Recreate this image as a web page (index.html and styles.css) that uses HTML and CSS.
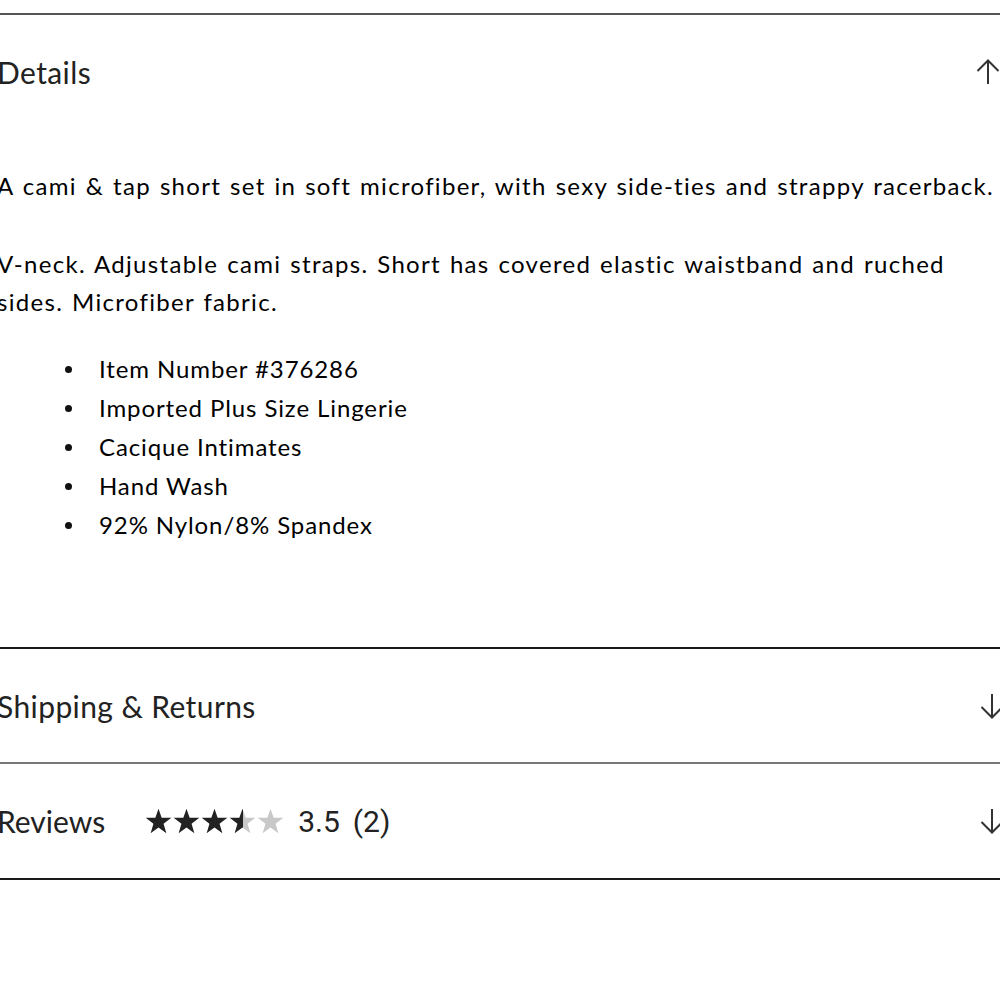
FILE: index.html
```html
<!DOCTYPE html>
<html lang="en">
<head>
<meta charset="utf-8">
<title>Product details</title>
<link rel="stylesheet" href="styles.css">
</head>
<body>
<div class="accordion">
  <section class="panel panel-open">
    <div class="panel-head">
      <h2 class="panel-title">Details</h2>
      <svg class="arrow" viewBox="0 0 24 26" width="24" height="26" aria-hidden="true"><path d="M12 25V1M1.5 12L12 1.5L22.5 12" fill="none" stroke="#333" stroke-width="2"/></svg>
    </div>
    <div class="panel-body">
      <p class="para">A cami &amp; tap short set in soft microfiber, with sexy side-ties and strappy racerback.</p>
      <p class="para">V-neck. Adjustable cami straps. Short has covered elastic waistband and ruched sides. Microfiber fabric.</p>
      <ul class="facts">
        <li>Item Number #376286</li>
        <li>Imported Plus Size Lingerie</li>
        <li>Cacique Intimates</li>
        <li>Hand Wash</li>
        <li>92% Nylon/8% Spandex</li>
      </ul>
    </div>
  </section>
  <section class="panel panel-ship">
    <div class="panel-head">
      <h2 class="panel-title">Shipping &amp; Returns</h2>
      <svg class="arrow arrow-down" viewBox="0 0 24 26" width="24" height="26" aria-hidden="true"><path d="M12 1V25M1.5 14L12 24.5L22.5 14" fill="none" stroke="#333" stroke-width="2"/></svg>
    </div>
  </section>
  <section class="panel panel-reviews">
    <div class="panel-head panel-head-reviews">
      <div class="review-line">
        <h2 class="panel-title title-reviews">Reviews</h2>
        <span class="stars" aria-label="3.5 out of 5 stars">
          <svg class="star" viewBox="0 0 24 23" width="27" height="26"><polygon points="12,0.5 14.8,8.6 23.4,8.7 16.5,13.9 19,22.3 12,17.3 5,22.3 7.5,13.9 0.6,8.7 9.2,8.6" fill="#222"/></svg>
          <svg class="star" viewBox="0 0 24 23" width="27" height="26"><polygon points="12,0.5 14.8,8.6 23.4,8.7 16.5,13.9 19,22.3 12,17.3 5,22.3 7.5,13.9 0.6,8.7 9.2,8.6" fill="#222"/></svg>
          <svg class="star" viewBox="0 0 24 23" width="27" height="26"><polygon points="12,0.5 14.8,8.6 23.4,8.7 16.5,13.9 19,22.3 12,17.3 5,22.3 7.5,13.9 0.6,8.7 9.2,8.6" fill="#222"/></svg>
          <svg class="star" viewBox="0 0 24 23" width="27" height="26"><defs><linearGradient id="half"><stop offset="50%" stop-color="#222"/><stop offset="50%" stop-color="#c8c8c8"/></linearGradient></defs><polygon points="12,0.5 14.8,8.6 23.4,8.7 16.5,13.9 19,22.3 12,17.3 5,22.3 7.5,13.9 0.6,8.7 9.2,8.6" fill="url(#half)"/></svg>
          <svg class="star" viewBox="0 0 24 23" width="27" height="26"><polygon points="12,0.5 14.8,8.6 23.4,8.7 16.5,13.9 19,22.3 12,17.3 5,22.3 7.5,13.9 0.6,8.7 9.2,8.6" fill="#c8c8c8"/></svg>
        </span>
        <span class="score">3.5</span>
        <span class="count">(2)</span>
      </div>
      <svg class="arrow arrow-down" viewBox="0 0 24 26" width="24" height="26" aria-hidden="true"><path d="M12 1V25M1.5 14L12 24.5L22.5 14" fill="none" stroke="#333" stroke-width="2"/></svg>
    </div>
  </section>
</div>
</body>
</html>
```
FILE: styles.css
```css
html, body {
  margin: 0;
  padding: 0;
  background: #fff;
}
body {
  font-family: "Lato", "Noto Sans", sans-serif;
  color: #111;
  overflow: hidden;
}
.accordion {
  margin: 13px 0 0 -3px;
  width: 1007px;
}
.panel {
  border-top: 2px solid #555;
}
.panel-ship {
  border-top-color: #1a1a1a;
}
.panel-reviews {
  border-top-color: #777;
  border-bottom: 2px solid #1a1a1a;
}
.panel-head {
  height: 113px;
  display: flex;
  align-items: center;
  justify-content: space-between;
}
.panel-head-reviews {
  height: 114px;
}
.panel-title {
  margin: 0;
  font-size: 30px;
  font-weight: 400;
  letter-spacing: 0.4px;
  color: #222;
}
.title-reviews {
  letter-spacing: 0;
}
.arrow {
  display: block;
  margin-right: 4px;
}
.arrow-down {
  margin-right: 0;
}
.panel-body {
  padding: 39px 0 103px;
  font-size: 24px;
  letter-spacing: 0.9px;
  color: #000;
}
.para {
  margin: 0 0 40px;
  line-height: 38px;
  letter-spacing: 1.3px;
  word-spacing: 1.5px;
}
.para + .para {
  margin-bottom: 28px;
}
.facts {
  margin: 0;
  padding: 0;
  list-style: none;
  line-height: 39px;
}
.facts li {
  display: flex;
  align-items: center;
}
.facts li::before {
  content: "";
  flex: none;
  width: 7px;
  height: 7px;
  border-radius: 50%;
  background: #111;
  margin: 2px 27px 0 68px;
}
.review-line {
  display: flex;
  align-items: center;
}
.stars {
  display: flex;
  gap: 1px;
  margin-left: 40px;
}
.star {
  display: block;
}
.score, .count {
  font-family: "Roboto", "Liberation Sans", sans-serif;
  font-size: 30px;
  color: #222;
}
.score {
  margin-left: 14px;
}
.count {
  margin-left: 13px;
}
```
